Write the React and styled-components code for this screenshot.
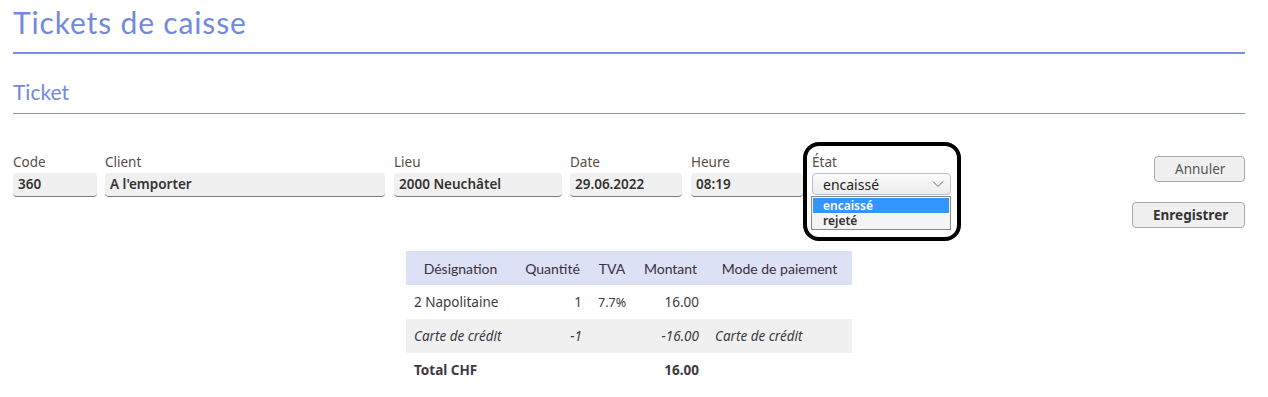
import React from "react";
import styled, { createGlobalStyle } from "styled-components";

const Global = createGlobalStyle`
  html, body { margin: 0; padding: 0; background: #fff; }
  body { font-family: "Noto Sans", "Open Sans", sans-serif; color: #333; }
  * { box-sizing: border-box; }
`;

const Page = styled.div`
  padding: 0 23px 0 13px;
  position: relative;
`;

const Title = styled.h1`
  margin: 0;
  padding-top: 3px;
  font-family: Lato, sans-serif;
  font-weight: 400;
  font-size: 30px;
  line-height: 38px;
  color: #7389dd;
  letter-spacing: 0.85px;
  height: 54px;
  border-bottom: 2px solid #7890e0;
`;

const Section = styled.h2`
  margin: 0;
  padding-top: 25px;
  font-family: Lato, sans-serif;
  font-weight: 400;
  font-size: 21px;
  line-height: 26px;
  color: #7389dd;
  height: 60px;
  border-bottom: 1px solid #7b93e2;
`;

const FormRow = styled.div`
  display: flex;
  align-items: flex-start;
  margin-top: 38px;
`;

const Field = styled.div`
  display: flex;
  flex-direction: column;
  width: ${(p) => p.$w}px;
  margin-right: ${(p) => p.$gap ?? 8}px;
  position: relative;
`;

const Label = styled.label`
  font-size: 13.5px;
  line-height: 21px;
  color: #5a4c44;
  height: 21px;
`;

const Input = styled.div`
  height: 24px;
  background: #f0f0f0;
  border-bottom: 1px solid #7a7a7a;
  border-radius: 4px;
  padding: 0 5px;
  font-size: 13.5px;
  font-weight: 600;
  line-height: 23px;
  color: #333;
  white-space: nowrap;
  overflow: hidden;
`;

const Select = styled.div`
  height: 22px;
  background: linear-gradient(#fbfbfb, #ececec);
  border: 1px solid #b8bfd8;
  border-radius: 4px;
  display: flex;
  align-items: center;
  justify-content: space-between;
  padding: 0 6px 0 10px;
  font-size: 14px;
  color: #222;
`;

const Options = styled.ul`
  position: absolute;
  top: 44px;
  left: -1px;
  width: 140px;
  margin: 0;
  padding: 1px;
  list-style: none;
  background: #f4f4f4;
  border: 1px solid #8a8a8a;
  z-index: 2;
`;

const Option = styled.li`
  height: 15px;
  line-height: 15px;
  padding-left: 10px;
  font-size: 12px;
  font-weight: 600;
  color: ${(p) => (p.$active ? "#fff" : "#333")};
  background: ${(p) => (p.$active ? "#3395ff" : "transparent")};
`;

const Highlight = styled.div`
  position: absolute;
  left: 803px;
  top: 142px;
  width: 158px;
  height: 99px;
  border: 4px solid #000;
  border-radius: 16px;
  pointer-events: none;
  z-index: 3;
`;

const Actions = styled.div`
  margin-left: auto;
  margin-top: 4px;
  display: flex;
  flex-direction: column;
  align-items: flex-end;
  gap: 20px;
`;

const Button = styled.button`
  height: 26px;
  padding: 0 20px;
  background: #f0f0f0;
  border: 1px solid #a9a9a9;
  border-radius: 4px;
  font-family: "Noto Sans", sans-serif;
  font-size: 13.5px;
  font-weight: ${(p) => (p.$primary ? 700 : 400)};
  color: ${(p) => (p.$primary ? "#333" : "#555")};
  width: ${(p) => p.$w}px;
`;

const TableWrap = styled.div`
  display: flex;
  justify-content: center;
  margin-top: 23px;
`;

const Table = styled.table`
  border-collapse: collapse;
  table-layout: fixed;
  width: 446px;
  font-size: 13.5px;
`;

const Th = styled.th`
  width: ${(p) => p.$w}px;
  background: #dce1f5;
  height: 34px;
  padding: 0 6px;
  font-family: Lato, sans-serif;
  font-weight: 400;
  font-size: 14px;
  color: #3a3040;
  text-align: center;
  white-space: nowrap;
`;

const Tr = styled.tr`
  background: ${(p) => (p.$shade ? "#f0f0f0" : "transparent")};
  font-style: ${(p) => (p.$italic ? "italic" : "normal")};
  font-weight: ${(p) => (p.$bold ? 700 : 400)};
`;

const Td = styled.td`
  height: 34px;
  padding: 0 8px;
  color: #3d3a44;
  text-align: ${(p) => (p.$right ? "right" : "left")};
  font-size: ${(p) => (p.$small ? 12.5 : 13.5)}px;
  white-space: nowrap;
`;

const Chevron = () => (
  <svg width="12" height="8" viewBox="0 0 12 8" fill="none">
    <path d="M1 1.5 L6 6.5 L11 1.5" stroke="#666" strokeWidth="1" />
  </svg>
);

export default function App() {
  return (
    <>
      <Global />
      <Page>
        <Title>Tickets de caisse</Title>
        <Section>Ticket</Section>
        <FormRow>
          <Field $w={84}>
            <Label>Code</Label>
            <Input>360</Input>
          </Field>
          <Field $w={280} $gap={9}>
            <Label>Client</Label>
            <Input>A l'emporter</Input>
          </Field>
          <Field $w={168}>
            <Label>Lieu</Label>
            <Input>2000 Neuchâtel</Input>
          </Field>
          <Field $w={112} $gap={9}>
            <Label>Date</Label>
            <Input>29.06.2022</Input>
          </Field>
          <Field $w={112} $gap={9}>
            <Label>Heure</Label>
            <Input>08:19</Input>
          </Field>
          <Field $w={139} $gap={0}>
            <Label>État</Label>
            <Select>
              <span>encaissé</span>
              <Chevron />
            </Select>
            <Options>
              <Option $active>encaissé</Option>
              <Option>rejeté</Option>
            </Options>
          </Field>
          <Actions>
            <Button $w={91}>Annuler</Button>
            <Button $w={113} $primary>
              Enregistrer
            </Button>
          </Actions>
        </FormRow>
        <Highlight />
        <TableWrap>
          <Table>
            <thead>
              <tr>
                <Th $w={109}>Désignation</Th>
                <Th $w={75}>Quantité</Th>
                <Th $w={44}>TVA</Th>
                <Th $w={73}>Montant</Th>
                <Th $w={145}>Mode de paiement</Th>
              </tr>
            </thead>
            <tbody>
              <Tr>
                <Td>2 Napolitaine</Td>
                <Td $right>1</Td>
                <Td $small>7.7%</Td>
                <Td $right>16.00</Td>
                <Td></Td>
              </Tr>
              <Tr $shade $italic>
                <Td>Carte de crédit</Td>
                <Td $right>-1</Td>
                <Td></Td>
                <Td $right>-16.00</Td>
                <Td>Carte de crédit</Td>
              </Tr>
              <Tr $bold>
                <Td>Total CHF</Td>
                <Td></Td>
                <Td></Td>
                <Td $right>16.00</Td>
                <Td></Td>
              </Tr>
            </tbody>
          </Table>
        </TableWrap>
      </Page>
    </>
  );
}
